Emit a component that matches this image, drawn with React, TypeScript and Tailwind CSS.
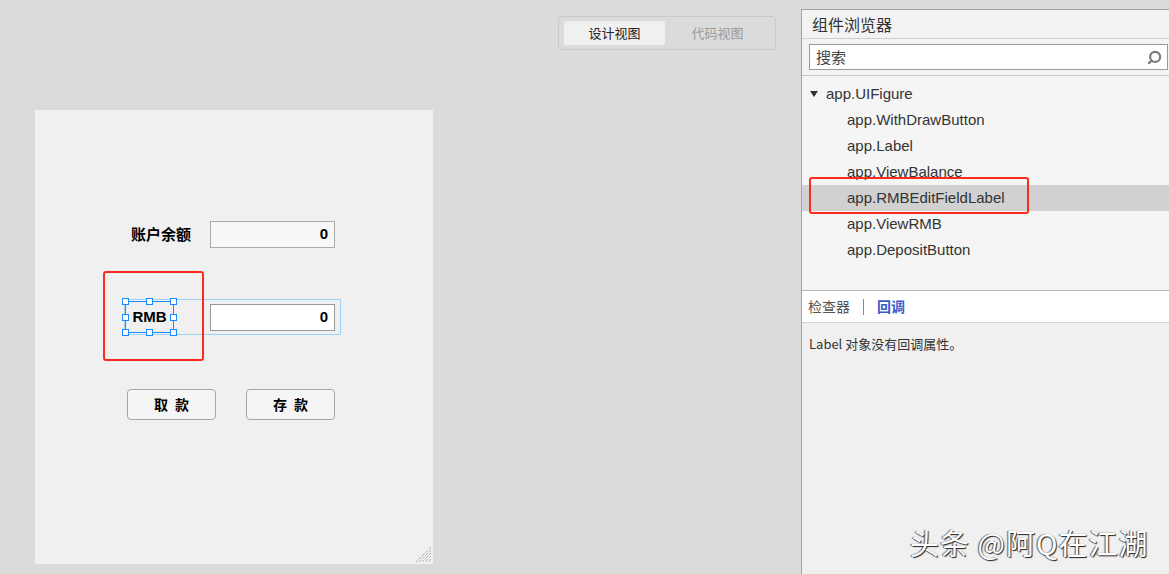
import { Search } from 'lucide-react';

const cn = '"Microsoft YaHei", "Noto Sans CJK SC", "Liberation Sans", sans-serif';
const latin = '"Liberation Sans", "Noto Sans CJK SC", sans-serif';

const treeItems = [
  'app.WithDrawButton',
  'app.Label',
  'app.ViewBalance',
  'app.RMBEditFieldLabel',
  'app.ViewRMB',
  'app.DepositButton',
];

function Handle({ className }: { className: string }) {
  return <div className={`absolute w-[7px] h-[7px] bg-white border border-[#1a8cff] ${className}`} />;
}

function EditField({ bg, border }: { bg: string; border: string }) {
  return (
    <div className={`w-[125px] h-[27px] border ${bg} ${border} flex items-center justify-end pr-[6px] text-[15px] font-bold text-black`} style={{ fontFamily: latin }}>
      0
    </div>
  );
}

function DesignButton({ label }: { label: string }) {
  return (
    <div className="w-[89px] h-[31px] rounded-[4px] border border-[#a6a6a6] bg-[#f5f5f5] flex items-center justify-center text-[14px] font-bold text-black tracking-[7px] pl-[7px]">
      {label}
    </div>
  );
}

function DesignCanvas() {
  return (
    <div className="relative w-[398px] h-[454px] bg-[#f0f0f0] flex flex-col pt-[111px]" style={{ fontFamily: cn }}>
      {/* balance row */}
      <div className="flex items-center">
        <div className="w-[175px] pr-[19px] flex justify-end text-[15px] font-bold text-black">账户余额</div>
        <EditField bg="bg-[#f7f7f7]" border="border-[#ababab]" />
      </div>

      {/* RMB row with selection */}
      <div className="relative mt-[53px] flex items-center">
        <div className="absolute left-[89px] -top-[2px] w-[217px] h-[36px] border border-[#9fd2f7]" />
        <div className="absolute left-[68px] -top-[30px] w-[101px] h-[90px] border-2 border-[#ff2a1a] rounded-[3px]" />
        <div className="ml-[90px] w-[49px] h-[32px] relative border border-[#1a8cff] flex items-center justify-center text-[15px] font-bold text-black" style={{ fontFamily: latin }}>
          RMB
          <Handle className="-left-[4px] -top-[4px]" />
          <Handle className="left-[20px] -top-[4px]" />
          <Handle className="-right-[4px] -top-[4px]" />
          <Handle className="-left-[4px] top-[12px]" />
          <Handle className="-right-[4px] top-[12px]" />
          <Handle className="-left-[4px] -bottom-[4px]" />
          <Handle className="left-[20px] -bottom-[4px]" />
          <Handle className="-right-[4px] -bottom-[4px]" />
        </div>
        <div className="ml-[36px]">
          <EditField bg="bg-white" border="border-[#9a9a9a]" />
        </div>
      </div>

      {/* buttons */}
      <div className="mt-[56px] ml-[92px] flex gap-[30px]">
        <DesignButton label="取款" />
        <DesignButton label="存款" />
      </div>

      {/* resize grip */}
      <svg className="absolute right-[2px] bottom-[2px]" width="16" height="16" viewBox="0 0 16 16">
        {[0, 3, 6, 9, 12].map((o) => (
          <line key={o} x1={16} y1={o + 1} x2={o + 1} y2={16} stroke="#8f8f8f" strokeWidth="1" strokeDasharray="1 1" />
        ))}
      </svg>
    </div>
  );
}

export default function App() {
  return (
    <div className="relative flex w-[1169px] h-[574px] bg-[#dbdbdb] overflow-hidden" style={{ fontFamily: cn }}>
      <div className="w-[801px] shrink-0 flex flex-col">
        <div className="mt-[16px] ml-[558px] w-[218px] h-[34px] border border-[#c9c9c9] rounded-[3px] flex items-center px-[5px] text-[13px]">
          <div className="w-[101px] h-[24px] bg-[#f0f0f0] rounded-[2px] flex items-center justify-center text-[#222]">设计视图</div>
          <div className="flex-1 flex items-center justify-center text-[#9a9a9a]">代码视图</div>
        </div>
        <div className="mt-[60px] ml-[35px]">
          <DesignCanvas />
        </div>
      </div>

      <div className="w-[368px] mt-[9px] border-l border-t border-[#a3a3a3] bg-[#f5f5f5] flex flex-col">
        <div className="h-[29px] bg-[#f3f3f3] border-b border-[#d0d0d0] px-[10px] flex items-center text-[16px] text-[#333]">组件浏览器</div>
        <div className="bg-[#f3f3f3] pl-[7px] pr-[1px] pt-[5px] pb-[5px] border-b border-[#c8c8c8]">
          <div className="h-[26px] bg-white border border-[#9a9a9a] flex items-center justify-between pl-[6px] pr-[5px]">
            <span className="text-[15px] text-[#444]">搜索</span>
            <Search size={15} strokeWidth={3.5} className="text-[#7a7a7a] -scale-x-100" />
          </div>
        </div>
        <div className="h-[215px] border-b border-[#b5b5b5] pt-[5px] text-[15px] text-[#333]" style={{ fontFamily: latin }}>
          <div className="h-[26px] flex items-center pl-[8px]">
            <span className="w-0 h-0 border-l-[4px] border-r-[4px] border-t-[6px] border-l-transparent border-r-transparent border-t-[#333] mr-[8px]" />
            app.UIFigure
          </div>
          {treeItems.map((t) => (
            <div
              key={t}
              className={`relative h-[26px] flex items-center pl-[45px] ${t === 'app.RMBEditFieldLabel' ? 'bg-[#d1d1d1]' : ''}`}
            >
              {t}
              {t === 'app.RMBEditFieldLabel' && (
                <div className="absolute left-[7px] top-[-8px] w-[220px] h-[37px] border-2 border-[#ff2a1a] rounded-[3px]" />
              )}
            </div>
          ))}
        </div>
        <div className="h-[32px] bg-white border-b border-[#d4d4d4] flex items-center px-[6px] text-[14px]">
          <span className="text-[#555]">检查器</span>
          <span className="ml-[13px] mr-[13px] w-px h-[16px] bg-[#888]" />
          <span className="text-[#3b5bcc] font-bold">回调</span>
        </div>
        <div className="flex-1 bg-[#f0f0f0] px-[7px] pt-[11px] text-[13px] text-[#333]">Label 对象没有回调属性。</div>
      </div>

      <div
        className="absolute left-[910px] top-[521px] text-[29px] text-white tracking-[1px]"
        style={{ textShadow: '1px 1px 1px #222, -1px 0 1px #555' }}
      >
        头条 @阿Q在江湖
      </div>
    </div>
  );
}
